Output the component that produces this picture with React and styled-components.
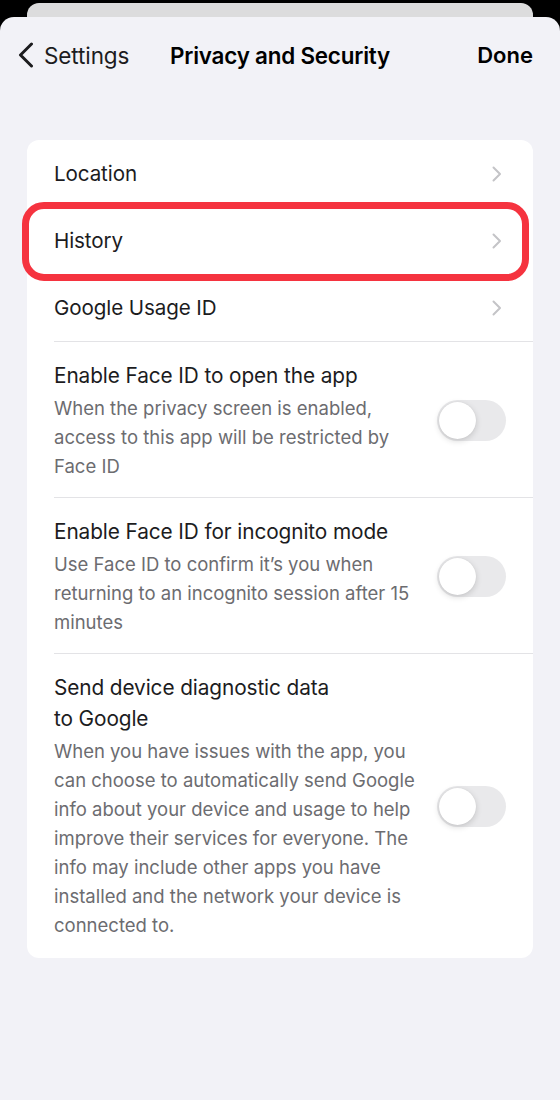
import React from 'react';
import styled, { createGlobalStyle } from 'styled-components';

const Global = createGlobalStyle`
  html, body {
    margin: 0;
    padding: 0;
    background: #000;
  }
  body {
    font-family: Inter, "Noto Sans", "Liberation Sans", sans-serif;
    -webkit-font-smoothing: antialiased;
  }
`;

const Screen = styled.div`
  width: 560px;
  height: 1100px;
  background: #000;
  padding-top: 3px;
  box-sizing: border-box;
  display: flex;
  flex-direction: column;
  overflow: hidden;
`;

const BackSheet = styled.div`
  margin: 0 27px;
  height: 30px;
  background: #dcdcdd;
  border-radius: 12px 12px 0 0;
  margin-bottom: -16px;
`;

const Sheet = styled.div`
  position: relative;
  flex: 1;
  background: #f2f2f7;
  border-radius: 14px 14px 0 0;
  padding: 0 27px;
`;

const NavBar = styled.div`
  display: grid;
  grid-template-columns: 1fr auto 1fr;
  align-items: center;
  height: 76px;
  margin: 0 -9px;
`;

const BackButton = styled.div`
  display: flex;
  align-items: center;
  gap: 10px;
  font-size: 22.5px;
  color: #1c1c1e;
  letter-spacing: -0.1px;
`;

const NavTitle = styled.div`
  font-size: 22.4px;
  font-weight: 600;
  color: #000;
  letter-spacing: -0.2px;
`;

const DoneButton = styled.div`
  justify-self: end;
  font-size: 22px;
  font-weight: 600;
  color: #000;
  margin-right: 9px;
`;

const Card = styled.div`
  margin-top: 47px;
  background: #fff;
  border-radius: 12px;
`;

const LinkRow = styled.div`
  position: relative;
  height: 67px;
  display: flex;
  align-items: center;
  justify-content: space-between;
  padding: 0 31px 0 27px;
  font-size: 20.6px;
  color: #1c1c1e;
  letter-spacing: -0.1px;
`;

const Highlight = styled.div`
  position: absolute;
  left: -5px;
  right: 4px;
  top: -5px;
  bottom: -7px;
  border: 7px solid #f5333f;
  border-radius: 22px;
  pointer-events: none;
`;

const ToggleRow = styled.div`
  display: flex;
  align-items: center;
  gap: 19px;
  margin-left: 27px;
  padding: 18px 27px 16px 0;
  border-top: 1px solid #e3e3e6;
  &:last-child {
    padding-bottom: 18px;
  }
`;

const TextCol = styled.div`
  flex: 1;
  display: flex;
  flex-direction: column;
  gap: 3px;
`;

const RowTitle = styled.div`
  font-size: 20.8px;
  line-height: 31px;
  color: #1c1c1e;
  letter-spacing: -0.1px;
`;

const RowDesc = styled.div`
  font-size: 18.5px;
  line-height: 29px;
  color: #6c6c70;
`;

const Track = styled.div`
  flex: none;
  width: 69px;
  height: 41px;
  border-radius: 21px;
  background: ${p => (p.on ? '#34c759' : '#e9e9eb')};
  display: flex;
  align-items: center;
  padding: 0 2px;
  box-sizing: border-box;
  justify-content: ${p => (p.on ? 'flex-end' : 'flex-start')};
`;

const Knob = styled.div`
  width: 37px;
  height: 37px;
  border-radius: 50%;
  background: #fff;
  box-shadow: 0 2px 6px rgba(0, 0, 0, 0.16), 0 0 1px rgba(0, 0, 0, 0.1);
`;

const Chevron = () => (
  <svg width="10" height="16" viewBox="0 0 10 16">
    <polyline points="1.5,1.5 8,8 1.5,14.5" fill="none" stroke="#c4c4c7" strokeWidth="2" strokeLinecap="round" strokeLinejoin="round" />
  </svg>
);

const BackChevron = () => (
  <svg width="16" height="26" viewBox="0 0 16 26">
    <polyline points="13.5,2 2.5,13 13.5,24" fill="none" stroke="#1c1c1e" strokeWidth="3" strokeLinecap="round" strokeLinejoin="round" />
  </svg>
);

const Toggle = ({ on }) => (
  <Track on={on ? 1 : 0}>
    <Knob />
  </Track>
);

const links = ['Location', 'History', 'Google Usage ID'];

const toggles = [
  {
    title: 'Enable Face ID to open the app',
    desc: 'When the privacy screen is enabled, access to this app will be restricted by Face ID',
  },
  {
    title: 'Enable Face ID for incognito mode',
    desc: 'Use Face ID to confirm it\u2019s you when returning to an incognito session after 15 minutes',
  },
  {
    title: (
      <>
        Send device diagnostic data
        <br />
        to Google
      </>
    ),
    desc: 'When you have issues with the app, you can choose to automatically send Google info about your device and usage to help improve their services for everyone. The info may include other apps you have installed and the network your device is connected to.',
  },
];

export default function App() {
  return (
    <>
      <Global />
      <Screen>
        <BackSheet />
        <Sheet>
          <NavBar>
            <BackButton>
              <BackChevron />
              Settings
            </BackButton>
            <NavTitle>Privacy and Security</NavTitle>
            <DoneButton>Done</DoneButton>
          </NavBar>
          <Card>
            {links.map(l => (
              <LinkRow key={l}>
                {l}
                <Chevron />
                {l === 'History' && <Highlight />}
              </LinkRow>
            ))}
            {toggles.map((t, i) => (
              <ToggleRow key={i}>
                <TextCol>
                  <RowTitle>{t.title}</RowTitle>
                  <RowDesc>{t.desc}</RowDesc>
                </TextCol>
                <Toggle on={false} />
              </ToggleRow>
            ))}
          </Card>
        </Sheet>
      </Screen>
    </>
  );
}
